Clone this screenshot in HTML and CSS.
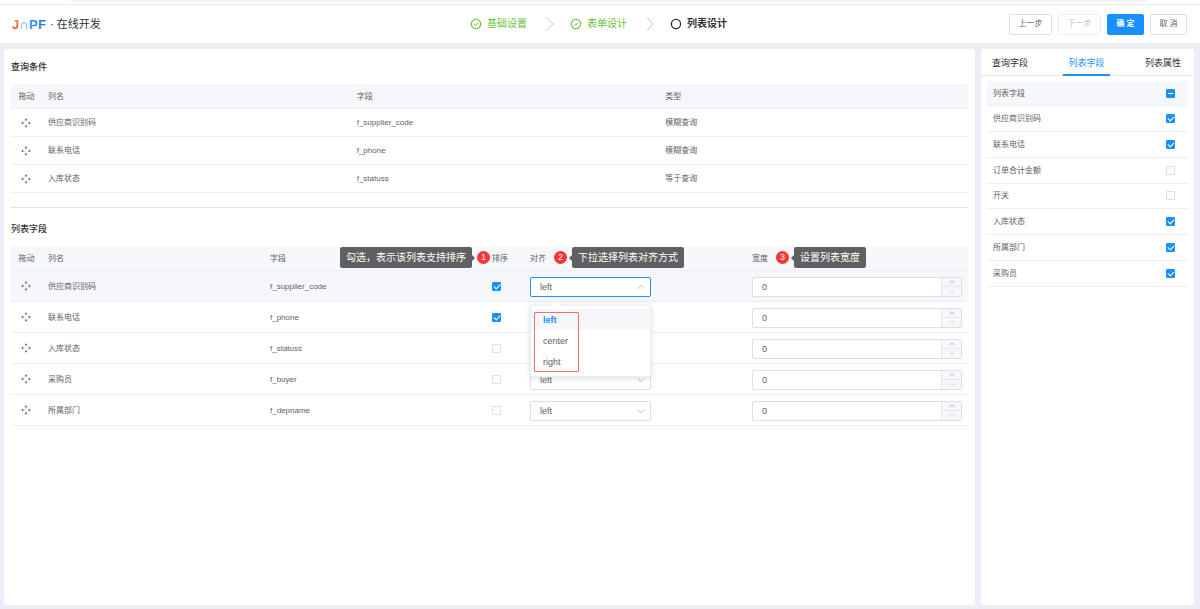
FILE: index.html
```html
<!DOCTYPE html>
<html lang="zh-CN">
<head>
<meta charset="utf-8">
<meta name="viewport" content="width=device-width, initial-scale=1">
<title>JNPF · 在线开发</title>
<link rel="stylesheet" href="styles.css">
</head>
<body>
<svg class="sprite" aria-hidden="true">
  <symbol id="drag" viewBox="0 0 10 10">
    <path d="M5 .2 6.500 2.2h-3zM5 9.800 3.500 7.800h3zM.2 5 2.2 3.500v3zM9.800 5 7.800 6.500v-3z" fill="currentColor"/>
    <path d="M5 2.200v1.300M5 6.500v1.300M2.200 5h1.300M6.500 5h1.300" stroke="currentColor" stroke-width=".8" opacity=".5"/>
  </symbol>
  <symbol id="down" viewBox="0 0 8 8"><path d="M.8 2.3 4 5.7 7.2 2.3" fill="none" stroke="currentColor" stroke-width=".9"/></symbol>
  <symbol id="up" viewBox="0 0 8 8"><path d="M.8 5.7 4 2.3 7.2 5.7" fill="none" stroke="currentColor" stroke-width=".9"/></symbol>
  <symbol id="done" viewBox="0 0 12 12"><circle cx="6" cy="6" r="4.700" fill="none" stroke="currentColor" stroke-width="1.100"/><path d="m3.9 6.1 1.500 1.500 2.700-3" fill="none" stroke="currentColor"/></symbol>
  <symbol id="next" viewBox="0 0 8 14"><path d="m.5.5 6.5 6.500-6.500 6.500" fill="none" stroke="currentColor"/></symbol>
</svg>

<div class="strip"></div>
<header class="header">
  <div class="brand">
    <svg class="logo" viewBox="0 0 35 14" role="img" aria-label="JNPF">
      <defs>
        <linearGradient id="warm" x1="0" y1="0" x2="0" y2="1"><stop offset="0" stop-color="#f7912e"/><stop offset="1" stop-color="#ee4f2b"/></linearGradient>
        <linearGradient id="cool" gradientUnits="userSpaceOnUse" x1="7" y1="0" x2="34" y2="0"><stop offset="0" stop-color="#35b6f5"/><stop offset="1" stop-color="#2b6fdc"/></linearGradient>
      </defs>
      <text class="logo-text" x="0" y="12" fill="url(#warm)">J</text>
      <text class="logo-text" x="7 17 26" y="12" fill="url(#cool)">∩PF</text>
    </svg>
    <span class="brand-name">· 在线开发</span>
  </div>
  <ol class="steps">
    <li class="step finished"><svg class="step-icon"><use href="#done"/></svg>基础设置</li>
    <li class="sep"><svg><use href="#next"/></svg></li>
    <li class="step finished"><svg class="step-icon"><use href="#done"/></svg>表单设计</li>
    <li class="sep"><svg><use href="#next"/></svg></li>
    <li class="step current"><svg class="step-icon" viewBox="0 0 12 12"><circle cx="6" cy="6" r="4.600" fill="none" stroke="currentColor" stroke-width="1.3"/></svg>列表设计</li>
  </ol>
  <div class="actions">
    <button class="btn" type="button">上一步</button>
    <button class="btn" type="button" disabled>下一步</button>
    <button class="btn short primary" type="button">确 定</button>
    <button class="btn short" type="button">取 消</button>
  </div>
</header>

<div class="layout">
  <main class="panel main">
    <h2 class="title">查询条件</h2>
    <table class="grid query">
      <colgroup><col class="col-drag"><col><col><col></colgroup>
      <thead><tr><th class="center">拖动</th><th>列名</th><th>字段</th><th>类型</th></tr></thead>
      <tbody>
        <tr><td class="center"><svg class="drag"><use href="#drag"/></svg></td><td>供应商识别码</td><td>f_supplier_code</td><td>模糊查询</td></tr>
        <tr><td class="center"><svg class="drag"><use href="#drag"/></svg></td><td>联系电话</td><td>f_phone</td><td>模糊查询</td></tr>
        <tr><td class="center"><svg class="drag"><use href="#drag"/></svg></td><td>入库状态</td><td>f_statuss</td><td>等于查询</td></tr>
      </tbody>
    </table>
    <hr class="divider">
    <h2 class="title">列表字段</h2>
    <table class="grid fields">
      <colgroup><col class="col-drag"><col><col><col class="col-sort"><col><col></colgroup>
      <thead><tr>
        <th class="center">拖动</th><th>列名</th><th>字段</th>
        <th>排序<div class="note before"><span class="bubble">勾选，表示该列表支持排序</span><span class="badge">1</span></div></th>
        <th>对齐<div class="note after"><span class="badge">2</span><span class="bubble">下拉选择列表对齐方式</span></div></th>
        <th>宽度<div class="note after"><span class="badge">3</span><span class="bubble">设置列表宽度</span></div></th>
      </tr></thead>
      <tbody>
        <tr class="hover">
          <td class="center"><svg class="drag"><use href="#drag"/></svg></td><td>供应商识别码</td><td>f_supplier_code</td>
          <td><input class="check" type="checkbox" aria-label="供应商识别码 排序" checked></td>
          <td><div class="select open"><select aria-label="供应商识别码 对齐"><option>left</option><option>center</option><option>right</option></select><svg><use href="#up"/></svg>
            <div class="menu"><ul class="options" role="listbox"><li class="option selected" role="option" aria-selected="true">left</li><li class="option" role="option">center</li><li class="option" role="option">right</li></ul><div class="frame"></div></div></div></td>
          <td><div class="number"><input type="text" value="0" aria-label="供应商识别码 宽度"><div class="spin"><button type="button" aria-label="增加"><svg><use href="#up"/></svg></button><button type="button" aria-label="减少" disabled><svg><use href="#down"/></svg></button></div></div></td>
        </tr>
        <tr>
          <td class="center"><svg class="drag"><use href="#drag"/></svg></td><td>联系电话</td><td>f_phone</td>
          <td><input class="check" type="checkbox" aria-label="联系电话 排序" checked></td>
          <td><div class="select"><select aria-label="联系电话 对齐"><option>left</option><option>center</option><option>right</option></select><svg><use href="#down"/></svg></div></td>
          <td><div class="number"><input type="text" value="0" aria-label="联系电话 宽度"><div class="spin"><button type="button" aria-label="增加"><svg><use href="#up"/></svg></button><button type="button" aria-label="减少" disabled><svg><use href="#down"/></svg></button></div></div></td>
        </tr>
        <tr>
          <td class="center"><svg class="drag"><use href="#drag"/></svg></td><td>入库状态</td><td>f_statuss</td>
          <td><input class="check" type="checkbox" aria-label="入库状态 排序"></td>
          <td><div class="select"><select aria-label="入库状态 对齐"><option>left</option><option>center</option><option>right</option></select><svg><use href="#down"/></svg></div></td>
          <td><div class="number"><input type="text" value="0" aria-label="入库状态 宽度"><div class="spin"><button type="button" aria-label="增加"><svg><use href="#up"/></svg></button><button type="button" aria-label="减少" disabled><svg><use href="#down"/></svg></button></div></div></td>
        </tr>
        <tr>
          <td class="center"><svg class="drag"><use href="#drag"/></svg></td><td>采购员</td><td>f_buyer</td>
          <td><input class="check" type="checkbox" aria-label="采购员 排序"></td>
          <td><div class="select"><select aria-label="采购员 对齐"><option>left</option><option>center</option><option>right</option></select><svg><use href="#down"/></svg></div></td>
          <td><div class="number"><input type="text" value="0" aria-label="采购员 宽度"><div class="spin"><button type="button" aria-label="增加"><svg><use href="#up"/></svg></button><button type="button" aria-label="减少" disabled><svg><use href="#down"/></svg></button></div></div></td>
        </tr>
        <tr>
          <td class="center"><svg class="drag"><use href="#drag"/></svg></td><td>所属部门</td><td>f_depname</td>
          <td><input class="check" type="checkbox" aria-label="所属部门 排序"></td>
          <td><div class="select"><select aria-label="所属部门 对齐"><option>left</option><option>center</option><option>right</option></select><svg><use href="#down"/></svg></div></td>
          <td><div class="number"><input type="text" value="0" aria-label="所属部门 宽度"><div class="spin"><button type="button" aria-label="增加"><svg><use href="#up"/></svg></button><button type="button" aria-label="减少" disabled><svg><use href="#down"/></svg></button></div></div></td>
        </tr>
      </tbody>
    </table>
  </main>

  <aside class="panel side">
    <div class="tabs" role="tablist">
      <button class="tab" type="button" role="tab">查询字段</button>
      <button class="tab active" type="button" role="tab" aria-selected="true">列表字段</button>
      <button class="tab" type="button" role="tab">列表属性</button>
    </div>
    <div class="side-body">
      <table class="grid picker">
        <colgroup><col><col class="col-check"></colgroup>
        <thead><tr><th><label for="f0">列表字段</label></th><th class="center"><input class="check partial" type="checkbox" id="f0"></th></tr></thead>
        <tbody>
          <tr><td><label for="f1">供应商识别码</label></td><td class="center"><input class="check" type="checkbox" id="f1" checked></td></tr>
          <tr><td><label for="f2">联系电话</label></td><td class="center"><input class="check" type="checkbox" id="f2" checked></td></tr>
          <tr><td><label for="f3">订单合计金额</label></td><td class="center"><input class="check" type="checkbox" id="f3"></td></tr>
          <tr><td><label for="f4">开关</label></td><td class="center"><input class="check" type="checkbox" id="f4"></td></tr>
          <tr><td><label for="f5">入库状态</label></td><td class="center"><input class="check" type="checkbox" id="f5" checked></td></tr>
          <tr><td><label for="f6">所属部门</label></td><td class="center"><input class="check" type="checkbox" id="f6" checked></td></tr>
          <tr><td><label for="f7">采购员</label></td><td class="center"><input class="check" type="checkbox" id="f7" checked></td></tr>
        </tbody>
      </table>
    </div>
  </aside>
</div>
</body>
</html>
```

FILE: styles.css
```css
* { box-sizing: border-box; }

body {
  margin: 0;
  min-height: 100vh;
  display: flex;
  flex-direction: column;
  background: #ebeef5;
  color: #606266;
  font: 8px/12px "Liberation Sans", "Noto Sans CJK SC", sans-serif;
}

button, input, select { font: inherit; color: inherit; margin: 0; }
button { cursor: pointer; }
svg { display: block; }
.sprite { position: absolute; width: 0; height: 0; }

/* Header */
.strip {
  height: 5px;
  padding: 0 53px 0 71px;
  background: #fff;
  border-bottom: 1px solid #e9ebee;
}
.strip::before { content: ""; display: block; height: 2px; background: #f1f3f4; }

.header {
  display: grid;
  grid-template-columns: 1fr auto 1fr;
  align-items: center;
  height: 38px;
  padding: 0 13px 0 12px;
  background: #fff;
}
.brand { display: flex; align-items: center; gap: 3px; }
.logo { width: 35px; height: 14px; }
.logo-text { font: 700 13px "Liberation Sans", sans-serif; }
.brand-name { font-size: 11px; line-height: 16px; color: #303133; }

.steps { display: flex; align-items: center; margin: 0; padding: 0 2px 0 0; list-style: none; font-size: 10px; line-height: 14px; }
.step { display: flex; align-items: center; gap: 5px; }
.step-icon { width: 12px; height: 12px; }
.finished { color: #67c23a; }
.current { color: #303133; font-weight: 700; }
.sep { padding: 0 16px 0 19px; color: #c8cbd2; }
.sep svg { width: 8px; height: 14px; }

.actions { display: flex; justify-content: flex-end; gap: 6px; }
.btn {
  min-width: 43px;
  height: 21px;
  padding: 0;
  border: 1px solid #dcdfe6;
  border-radius: 2px;
  background: #fff;
}
.btn.short { min-width: 37px; }
.btn:disabled { color: #c0c4cc; border-color: #ebeef5; }
.btn.primary { background: #1890ff; border-color: #1890ff; color: #fff; font-weight: 700; }

/* Panels */
.layout { flex: 1; display: flex; gap: 6px; padding: 6px 6px 4px 4px; }
.panel { background: #fff; border-radius: 3px; }
.main { flex: 1; min-width: 0; padding: 0 7px; }
.side { width: 213px; }
.title { margin: 0; padding: 12px 0 10px; font-size: 9px; line-height: 13px; font-weight: 500; color: #303133; }
.divider { margin: 14px 0 3px; border: 0; border-top: 1px solid #dfe1e6; }

/* Tables */
.grid { width: 100%; table-layout: fixed; border-collapse: separate; border-spacing: 0; }
.grid th, .grid td { padding: 1px 6px 0; text-align: left; font-weight: 400; border-bottom: 1px solid #ebeef5; }
.grid th { position: relative; height: 25px; background: #f5f7fa; }
.grid .center { text-align: center; padding: 0; }
.grid th.center { padding-top: 1px; }
.query td { height: 28px; }
.fields td { height: 31px; }
.hover td { background: #f5f7fa; }
.col-drag { width: 31px; }
.col-sort { width: 38px; }
.col-check { width: 35px; }
.picker { height: 206px; }
.picker label { display: block; }
.drag { width: 10px; height: 10px; margin: 0 10px; }

/* Checkboxes */
.check {
  appearance: none;
  display: block;
  position: relative;
  width: 9px;
  height: 9px;
  border: 1px solid #dcdfe6;
  border-radius: 1px;
  background: #fff;
}
.center .check { margin: 0 auto; }
.check:checked, .check.partial { background: #1890ff; border-color: #1890ff; }
.check:checked::after {
  content: "";
  position: absolute;
  left: 2px;
  top: 0;
  width: 3px;
  height: 5px;
  border: solid #fff;
  border-width: 0 1px 1px 0;
  transform: rotate(45deg);
}
.check.partial::after { content: ""; position: absolute; left: 1px; top: 3px; width: 5px; height: 1px; background: #fff; }

/* Drop-downs */
.select { position: relative; width: 121px; }
.select select {
  appearance: none;
  display: block;
  width: 100%;
  height: 20px;
  padding: 1px 20px 0 9px;
  border: 1px solid #dcdfe6;
  border-radius: 2px;
  background: #fff;
  font-size: 9px;
}
.select > svg { position: absolute; right: 6px; top: 6px; width: 8px; height: 8px; color: #b4b8c0; pointer-events: none; }
.select.open select { border-color: #1890ff; }
.menu {
  position: absolute;
  z-index: 2;
  top: 28px;
  left: 0;
  width: 100%;
  padding: 3px 0 4px;
  border: 1px solid #ebeef5;
  border-radius: 2px;
  background: #fff;
  box-shadow: 0 1px 6px rgba(0, 0, 0, .14);
  font-size: 9px;
}
.menu::before {
  content: "";
  position: absolute;
  left: 23px;
  top: -4px;
  width: 6px;
  height: 6px;
  background: #fff;
  transform: rotate(45deg);
}
.options { position: relative; margin: 0; padding: 0; list-style: none; }
.option { padding: 1px 12px 0; line-height: 20px; }
.option.selected { background: #f5f7fa; color: #1890ff; font-weight: 700; }
.frame { position: absolute; left: 3px; top: 6px; width: 45px; bottom: 4px; border: 1px solid #f56c6c; border-radius: 1px; }

/* Number boxes */
.number { display: flex; height: 20px; border: 1px solid #dcdfe6; border-radius: 2px; background: #fff; overflow: hidden; }
.number input { flex: 1; min-width: 0; padding: 1px 9px 0; border: 0; background: none; font-size: 9px; }
.spin { display: flex; flex-direction: column; width: 20px; border-left: 1px solid #e4e7ed; }
.spin button { flex: 1; display: flex; align-items: center; justify-content: center; padding: 0; border: 0; background: #f5f7fa; color: #909399; }
.spin button + button { border-top: 1px solid #e4e7ed; }
.spin button:disabled { color: #c0c4cc; }
.spin svg { width: 6px; height: 6px; }

/* Numbered notes */
.note { position: absolute; z-index: 3; top: 1px; display: flex; align-items: center; gap: 5px; white-space: nowrap; }
.note.before { right: 34px; }
.note.after { left: 30px; }
.badge { width: 13px; border-radius: 50%; background: #f93536; color: #fff; font-size: 9px; line-height: 13px; text-align: center; }
.bubble { position: relative; padding: 0 6px; border-radius: 2px; background: #5f6061; color: #fff; font-size: 10px; line-height: 21px; }
.bubble::after { content: ""; position: absolute; top: 8px; border: 3px solid transparent; }
.before .bubble::after { left: 100%; border-left-color: #5f6061; border-right-width: 0; }
.after .bubble::after { right: 100%; border-right-color: #5f6061; border-left-width: 0; }

/* Side panel */
.tabs { display: flex; justify-content: space-between; padding: 0 8px 0 6px; border-bottom: 1px solid #e4e7ed; }
.tab { height: 27px; margin-bottom: -1px; padding: 3px 5px 0; border: 0; border-bottom: 2px solid transparent; background: none; font-size: 9px; color: #303133; }
.tab.active { color: #1890ff; border-color: #1890ff; }
.side-body { padding: 5px 6px; }
```
